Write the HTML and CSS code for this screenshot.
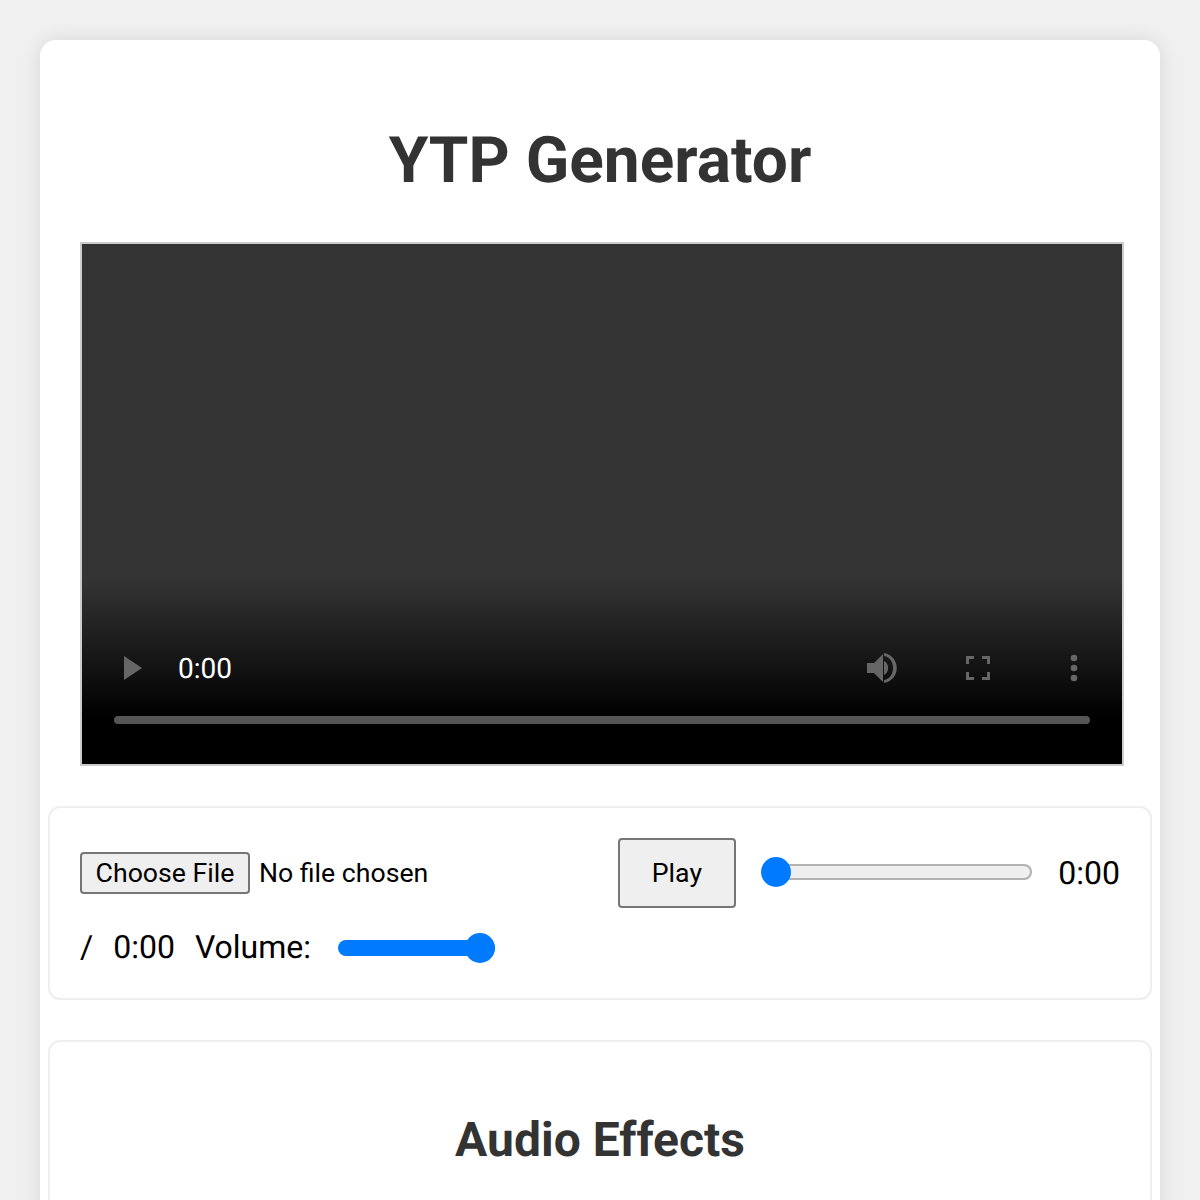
FILE: index.html
```html
<!DOCTYPE html>
<html lang="en">
<head>
<meta charset="utf-8">
<title>YTP Generator</title>
<link rel="stylesheet" href="styles.css">
</head>
<body>
<main class="container">
  <h1 class="title">YTP Generator</h1>
  <div class="video">
    <div class="video-controls">
      <div class="video-row">
        <svg class="icon-play" width="20" height="24" viewBox="0 0 20 24"><path d="M1 0 L19 12 L1 24 Z"/></svg>
        <span class="video-time">0:00</span>
        <span class="video-spacer"></span>
        <svg class="icon-volume" width="32" height="32" viewBox="0 0 32 32"><path d="M1 11 H8 L17 2 V30 L8 21 H1 Z"/><path d="M18 9 A8 8 0 0 1 18 23 Z"/><path d="M18 1 C35 4 35 28 18 31 L18 28 C30 26 30 6 18 4 Z"/></svg>
        <svg class="icon-full" width="24" height="24" viewBox="0 0 24 24"><path d="M0 0 H8 V3 H3 V8 H0 Z M16 0 H24 V8 H21 V3 H16 Z M0 16 H3 V21 H8 V24 H0 Z M21 16 H24 V24 H16 V21 H21 Z"/></svg>
        <svg class="icon-more" width="8" height="28" viewBox="0 0 8 28"><circle cx="4" cy="4" r="3.3"/><circle cx="4" cy="14" r="3.3"/><circle cx="4" cy="24" r="3.3"/></svg>
      </div>
      <div class="video-progress"></div>
    </div>
  </div>
  <section class="panel panel-controls">
    <div class="row row-first">
      <input class="file" type="file">
      <button class="play" type="button">Play</button>
      <input class="range seek" type="range" min="0" max="100" value="0">
      <span class="time time-current">0:00</span>
    </div>
    <div class="row row-second">
      <span class="time">/</span>
      <span class="time time-total">0:00</span>
      <label class="time time-volume" for="volume">Volume:</label>
      <input class="range volume" id="volume" type="range" min="0" max="100" value="100">
    </div>
  </section>
  <section class="panel panel-effects">
    <h2 class="subtitle">Audio Effects</h2>
  </section>
</main>
</body>
</html>
```
FILE: styles.css
```css
* { box-sizing: border-box; }
html, body { height: 100%; overflow: hidden; }
body {
  margin: 0;
  padding: 40px 40px 0;
  background: #f0f0f0;
  font-family: Roboto, "Liberation Sans", sans-serif;
  color: #000;
  text-rendering: geometricPrecision;
}
.container {
  background: #fff;
  border-radius: 16px;
  box-shadow: 0 0 20px rgba(0,0,0,.1);
  padding: 0 8px;
  height: 1400px;
}
.title {
  margin: 0;
  padding-top: 81px;
  height: 202px;
  font-size: 64px;
  line-height: 80px;
  font-weight: 700;
  text-align: center;
  color: #333;
}
.video {
  width: 1044px;
  height: 524px;
  margin-left: 32px;
  border: 2px solid #ccc;
  background: #333;
  display: flex;
  flex-direction: column;
  justify-content: flex-end;
}
.video-controls {
  height: 184px;
  padding: 0 32px 40px;
  background: linear-gradient(to bottom, rgba(0,0,0,0), #000 75%);
  display: flex;
  flex-direction: column;
  justify-content: flex-end;
}
.video-row {
  display: flex;
  align-items: center;
  height: 32px;
  margin-bottom: 32px;
  padding-left: 9px;
}
.video-row svg { fill: #666; flex: none; }
.video-time {
  margin-left: 35px;
  padding-top: 1px;
  font-size: 28px;
  color: #fff;
}
.video-spacer { flex: 1; }
.icon-full { margin-left: 68px; }
.icon-more { margin-left: 80px; margin-right: 12px; }
.video-progress {
  height: 8px;
  border-radius: 4px;
  background: #555;
}
.panel {
  border: 2px solid #eee;
  border-radius: 12px;
  background: #fff;
}
.panel-controls {
  margin-top: 40px;
  height: 194px;
  padding: 30px 30px 0;
}
.row { display: flex; align-items: center; }
.row-first { height: 70px; }
.row-second { height: 40px; margin-top: 19px; }
.file {
  width: 506px;
  font: 26.67px Roboto, sans-serif;
  color: #000;
}
.file::file-selector-button {
  font: 26.67px Roboto, sans-serif;
  height: 42px;
  width: 170px;
  padding: 0;
  margin-right: 9px;
  background: #efefef;
  border: 2px solid #767676;
  border-radius: 4px;
  color: #000;
}
.play {
  width: 118px;
  height: 70px;
  margin-left: 32px;
  font: 26.67px Roboto, sans-serif;
  background: #efefef;
  border: 2px solid #767676;
  border-radius: 4px;
  color: #000;
}
.range {
  appearance: none;
  -webkit-appearance: none;
  height: 30px;
  margin: 0;
  background: transparent;
}
.range::-webkit-slider-runnable-track {
  height: 16px;
  border-radius: 8px;
}
.range::-webkit-slider-thumb {
  -webkit-appearance: none;
  width: 30px;
  height: 30px;
  margin-top: -7px;
  border-radius: 50%;
  background: #007bff;
}
.seek { width: 272px; margin-left: 25px; margin-bottom: 2px; }
.seek::-webkit-slider-runnable-track { background: #efefef; box-shadow: inset 0 0 0 2px #b2b2b2; }
.volume { width: 157px; margin-left: 27px; margin-top: 2px; }
.volume::-webkit-slider-runnable-track { background: #007bff; }
.time { font-size: 32px; line-height: 40px; }
.time-current { margin-left: 26px; }
.time-total { margin-left: 20px; }
.time-volume { margin-left: 20px; }
.panel-effects {
  margin-top: 40px;
  height: 400px;
}
.subtitle {
  margin: 0;
  padding-top: 68px;
  font-size: 48px;
  line-height: 60px;
  font-weight: 700;
  text-align: center;
  color: #333;
}
```
